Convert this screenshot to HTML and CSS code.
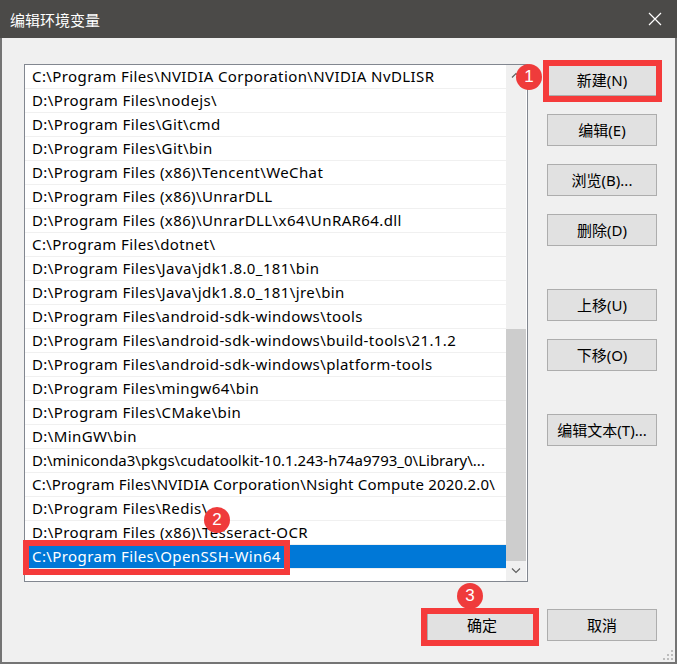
FILE: index.html
```html
<!DOCTYPE html>
<html lang="zh-CN">
<head>
    <meta charset="UTF-8">
    <title>编辑环境变量</title>
    <link rel="stylesheet" href="styles.css">
</head>
<body>
    <div class="window">
        <!-- 标题栏 -->
        <div class="titlebar">
            <span class="title">编辑环境变量</span>
            <svg class="close" width="14" height="14" viewBox="0 0 14 14">
                <path d="M1 1L13 13M13 1L1 13" stroke="#fff" stroke-width="1.2" fill="none"/>
            </svg>
        </div>
        <div class="body">
            <div class="main">
                <div class="list">
                    <ul class="rows">
                        <li>C:\Program Files\NVIDIA Corporation\NVIDIA NvDLISR</li>
                        <li>D:\Program Files\nodejs\</li>
                        <li>D:\Program Files\Git\cmd</li>
                        <li>D:\Program Files\Git\bin</li>
                        <li>D:\Program Files (x86)\Tencent\WeChat</li>
                        <li>D:\Program Files (x86)\UnrarDLL</li>
                        <li>D:\Program Files (x86)\UnrarDLL\x64\UnRAR64.dll</li>
                        <li>C:\Program Files\dotnet\</li>
                        <li>D:\Program Files\Java\jdk1.8.0_181\bin</li>
                        <li>D:\Program Files\Java\jdk1.8.0_181\jre\bin</li>
                        <li>D:\Program Files\android-sdk-windows\tools</li>
                        <li>D:\Program Files\android-sdk-windows\build-tools\21.1.2</li>
                        <li>D:\Program Files\android-sdk-windows\platform-tools</li>
                        <li>D:\Program Files\mingw64\bin</li>
                        <li>D:\Program Files\CMake\bin</li>
                        <li>D:\MinGW\bin</li>
                        <li class="long">D:\miniconda3\pkgs\cudatoolkit-10.1.243-h74a9793_0\Library\...</li>
                        <li class="long2">C:\Program Files\NVIDIA Corporation\Nsight Compute 2020.2.0\</li>
                        <li>D:\Program Files\Redis\</li>
                        <li>D:\Program Files (x86)\Tesseract-OCR</li>
                        <li class="selected">C:\Program Files\OpenSSH-Win64</li>
                    </ul>
                    <div class="scrollbar">
                        <div class="arrow">
                            <svg width="10" height="6" viewBox="0 0 10 6"><path d="M1 5.5L5 1.5L9 5.5" stroke="#606060" stroke-width="1.2" fill="none"/></svg>
                        </div>
                        <div class="track"></div>
                        <div class="thumb"></div>
                        <div class="arrow">
                            <svg width="10" height="6" viewBox="0 0 10 6"><path d="M1 0.5L5 4.5L9 0.5" stroke="#606060" stroke-width="1.2" fill="none"/></svg>
                        </div>
                    </div>
                </div>
                <div class="side">
                    <div class="group">
                        <div class="btn">新建(N)</div>
                        <div class="btn">编辑(E)</div>
                        <div class="btn">浏览(B)...</div>
                        <div class="btn">删除(D)</div>
                    </div>
                    <div class="group move">
                        <div class="btn">上移(U)</div>
                        <div class="btn">下移(O)</div>
                    </div>
                    <div class="group text">
                        <div class="btn">编辑文本(T)...</div>
                    </div>
                </div>
            </div>
            <div class="footer">
                <div class="btn">确定</div>
                <div class="btn">取消</div>
            </div>
        </div>

        <!-- 标注 -->
        <div class="mark mark1"></div>
        <div class="mark mark2"></div>
        <div class="mark mark3"></div>
        <span class="badge badge1">1</span>
        <span class="badge badge2">2</span>
        <span class="badge badge3">3</span>
        <svg class="grip" width="12" height="12" viewBox="0 0 12 12">
            <rect x="9" y="0" width="2" height="2" fill="#bdbdbd"/>
            <rect x="5" y="4" width="2" height="2" fill="#bdbdbd"/>
            <rect x="9" y="4" width="2" height="2" fill="#bdbdbd"/>
            <rect x="1" y="8" width="2" height="2" fill="#bdbdbd"/>
            <rect x="5" y="8" width="2" height="2" fill="#bdbdbd"/>
            <rect x="9" y="8" width="2" height="2" fill="#bdbdbd"/>
        </svg>
    </div>
</body>
</html>
```

FILE: styles.css
```css
*{
    padding: 0;
    margin: 0;
    box-sizing: border-box;
}
body{
    background-color: #f0f0f0;
    font-family: "Noto Sans", "Noto Sans CJK SC", sans-serif;
    font-size: 15px;
    color: #000;
}
.window{
    position: relative;
    width: 677px;
    height: 664px;
}
.titlebar{
    height: 38px;
    background-color: #4b4a48;
    display: flex;
    align-items: center;
    justify-content: space-between;
    padding: 0 15px 0 10px;
}
.title{
    color: #fff;
    font-size: 15px;
}
.body{
    height: 626px;
    background-color: #f0f0f0;
    border: 2px solid #747474;
    border-top: 0;
    padding: 26px 18px 0 22px;
}
.main{
    display: flex;
}
.list{
    width: 504px;
    height: 518px;
    border: 1px solid #828790;
    background-color: #fff;
    display: flex;
    padding-right: 1px;
}
.rows{
    list-style: none;
    width: 481px;
}
.rows li{
    height: 24px;
    line-height: 23px;
    padding-left: 7px;
    letter-spacing: 0.4px;
    border-bottom: 1px solid #f0f0f0;
    white-space: nowrap;
    overflow: hidden;
}
/* 长路径稍微收紧一点 */
.rows li.long{
    letter-spacing: 0;
}
.rows li.long2{
    letter-spacing: 0.2px;
}
.rows li.selected{
    background-color: #0078d7;
    color: #fff;
}
.scrollbar{
    width: 20px;
    display: flex;
    flex-direction: column;
    background-color: #f0f0f0;
}
.arrow{
    height: 20px;
    display: flex;
    justify-content: center;
    align-items: center;
}
.track{
    height: 244px;
}
.thumb{
    flex: 1;
    background-color: #cdcdcd;
}
.side{
    margin-left: 19px;
    width: 110px;
}
.group{
    display: flex;
    flex-direction: column;
    gap: 18px;
}
.group.move,.group.text{
    margin-top: 43px;
}
.btn{
    width: 110px;
    height: 32px;
    line-height: 30px;
    text-align: center;
    background-color: #e1e1e1;
    border: 1px solid #adadad;
}
.footer{
    display: flex;
    justify-content: flex-end;
    gap: 10px;
    margin-top: 27px;
}
.mark{
    position: absolute;
    border: 6px solid #f53b3b;
}
.mark1{
    left: 543px;
    top: 60px;
    width: 119px;
    height: 42px;
}
.mark2{
    left: 23px;
    top: 540px;
    width: 267px;
    height: 35px;
}
.mark3{
    left: 421px;
    top: 608px;
    width: 118px;
    height: 38px;
}
.badge{
    position: absolute;
    width: 26px;
    height: 26px;
    border-radius: 50%;
    background-color: #ef3b3b;
    color: #fff;
    font-family: "Liberation Sans", sans-serif;
    font-size: 17px;
    line-height: 26px;
    text-align: center;
}
.badge1{
    left: 516px;
    top: 64px;
}
.badge2{
    left: 204px;
    top: 507px;
}
.badge3{
    left: 457px;
    top: 583px;
}
.grip{
    position: absolute;
    right: 3px;
    bottom: 2px;
}
```
